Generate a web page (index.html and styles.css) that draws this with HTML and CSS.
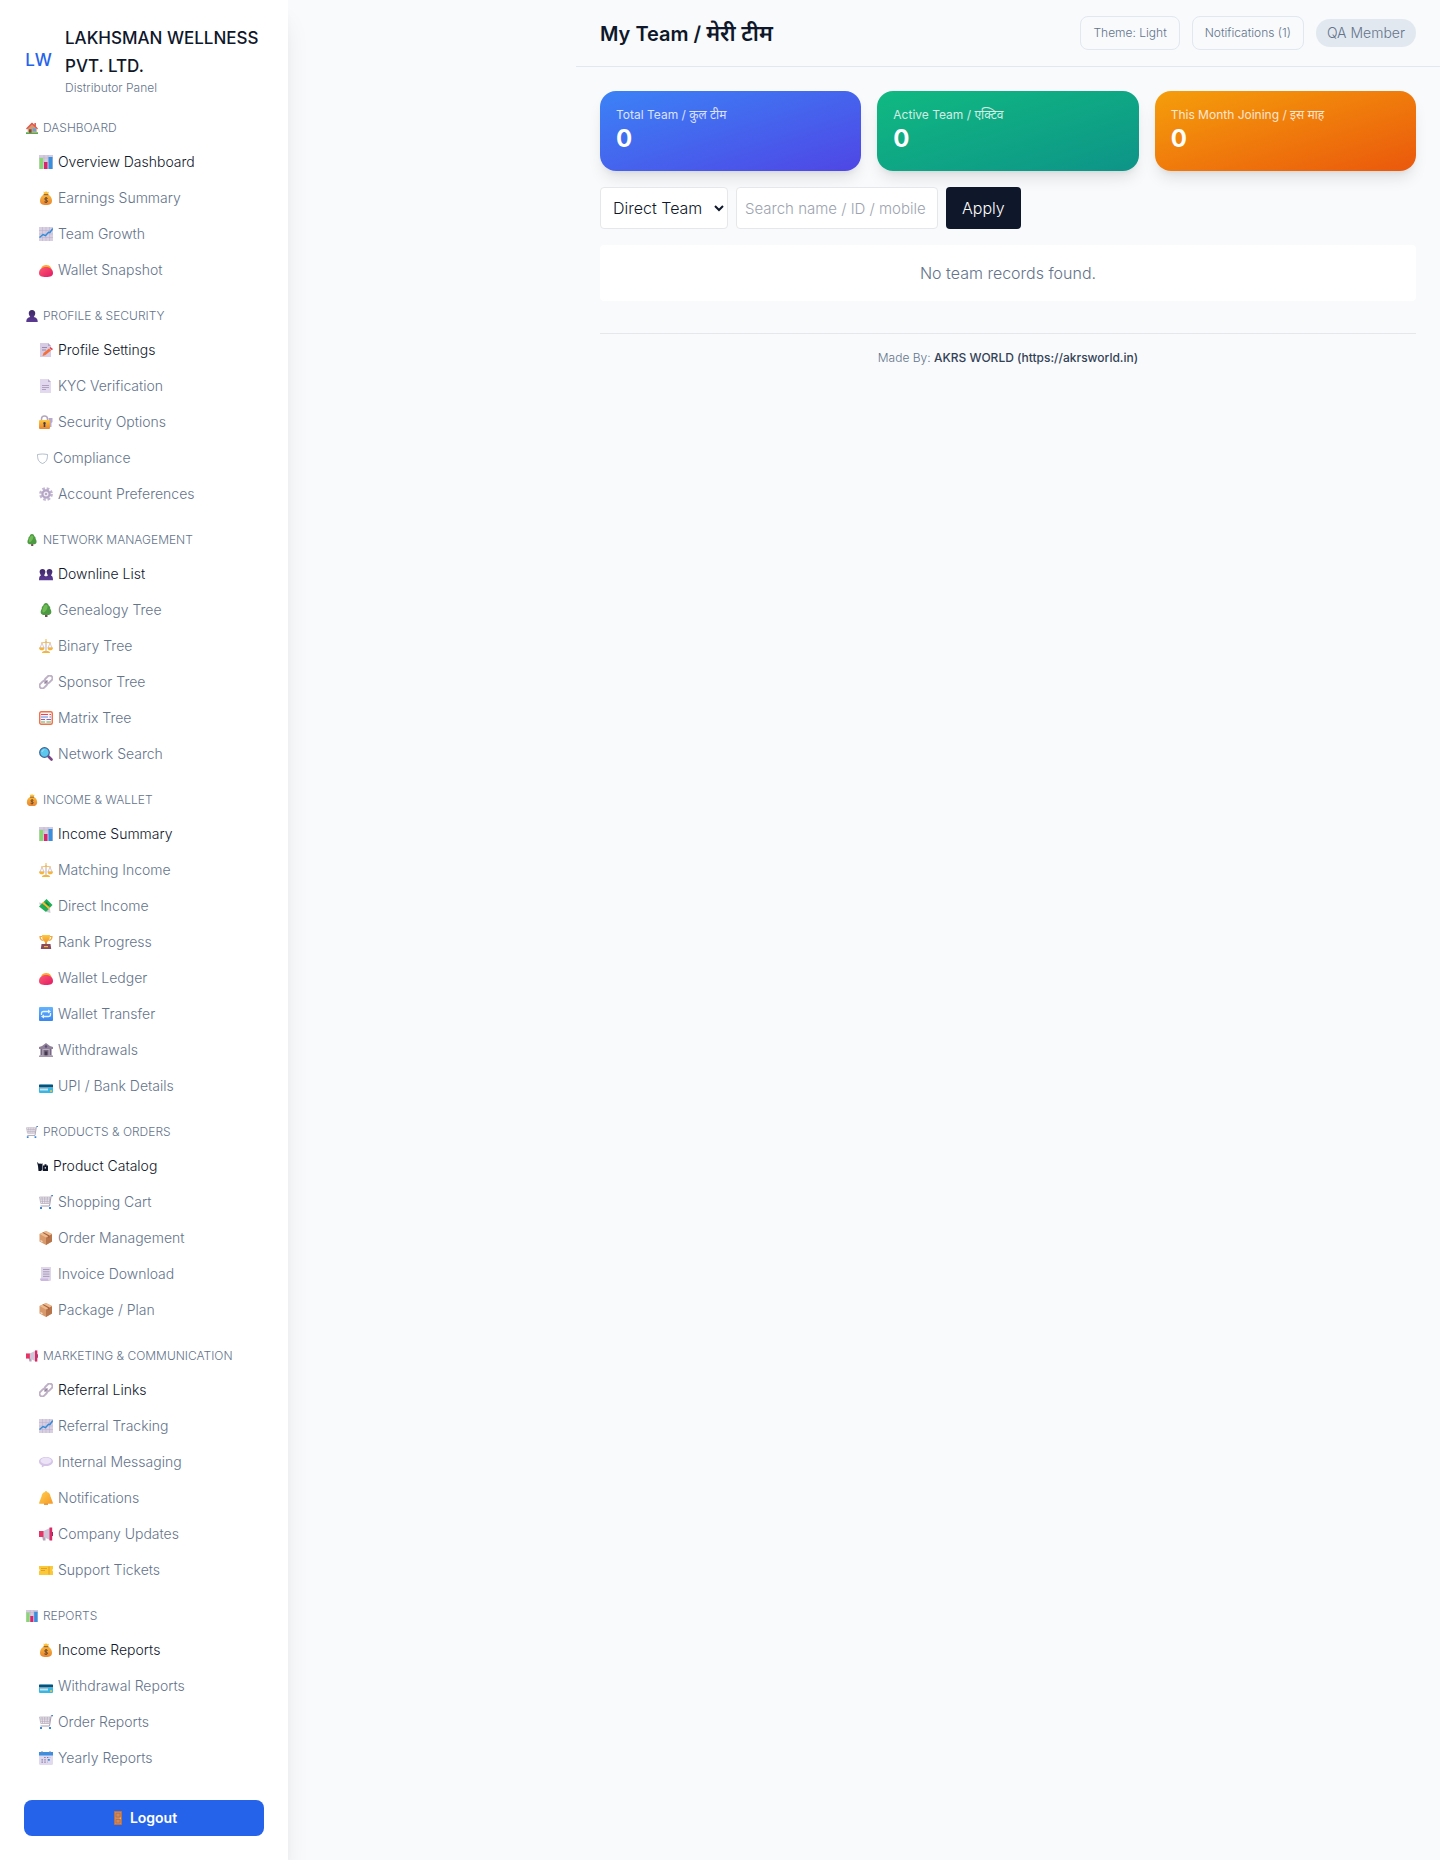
FILE: index.html
```html
<!DOCTYPE html>
<html lang="en">
<head>
<meta charset="utf-8">
<meta name="viewport" content="width=device-width, initial-scale=1">
<title>My Team</title>
<link rel="stylesheet" href="styles.css">
</head>
<body>
<svg class="sprite" aria-hidden="true">
  <defs>
    <linearGradient id="g-gold" x1="0" y1="0" x2="0" y2="1"><stop offset="0" stop-color="#ffc83d"/><stop offset="1" stop-color="#e88532"/></linearGradient>
    <linearGradient id="g-bell" x1="0" y1="0" x2="1" y2="1"><stop offset="0" stop-color="#ffd04a"/><stop offset="1" stop-color="#f59a2c"/></linearGradient>
    <linearGradient id="g-red" x1="0" y1="0" x2="1" y2="1"><stop offset="0" stop-color="#ff5a6e"/><stop offset="1" stop-color="#e01a66"/></linearGradient>
    <linearGradient id="g-purple" x1="0" y1="0" x2="0" y2="1"><stop offset="0" stop-color="#3f2a66"/><stop offset="1" stop-color="#5c3a94"/></linearGradient>
    <linearGradient id="g-blue" x1="0" y1="0" x2="0" y2="1"><stop offset="0" stop-color="#63b4ff"/><stop offset="1" stop-color="#3a86ee"/></linearGradient>
  </defs>
  <symbol id="house" viewBox="0 0 14 14"><path fill="#4caf50" d="M0 12h14v2H0z"/><path fill="#d29a72" d="M2 7l5-5 5.500 5v5.500H2z"/><path fill="#e2574c" d="M9.800 1.200h1.800v4H9.800zM0 7.500L6.500 1 7.500 1 14 7.500l-1 1L7 3 1.200 8.700z"/><path fill="#7a4a3a" d="M3.500 8.500h3v4h-3z"/><path fill="#4aa8f0" d="M8 7.500h3.500v3.200H8z"/></symbol>
  <symbol id="bars" viewBox="0 0 14 14"><path fill="#d5cbe0" d="M0 0h14v14H0z"/><path stroke="#b9adc9" stroke-width=".5" d="M0 3h14M5 0v8M9.200 0v8"/><path fill="#86d96b" d="M.5 3H4v11H.5z"/><path fill="#d6246e" d="M5 7h3.500v7H5z"/><path fill="#3a8fdc" d="M9.500 2h4v12h-4z"/></symbol>
  <symbol id="moneybag" viewBox="0 0 14 14"><path fill="url(#g-gold)" d="M4.500.5L6 1.200 7 0l1.200 1.200L10 .8 9 3.500c2.500 1 4 3.500 4 6 0 3.500-2 4.500-6 4.500s-6-1-6-4.500c0-2.500 1.500-5 4-6z"/><path fill="#8a5530" d="M4.600 3.200h4.800v1H4.600z"/><path fill="none" stroke="#6b4630" stroke-width="1" d="M8.700 7.500C8 6.700 5.600 6.700 5.600 8s3 .8 3 2.200-2.500 1.400-3.300.6M7.100 6v6"/></symbol>
  <symbol id="growth" viewBox="0 0 14 14"><path fill="#d8cfe2" d="M0 0h14v14H0z"/><path stroke="#b8accb" stroke-width=".5" d="M0 3.500h14M0 7h14M0 10.500h14M3.500 0v14M7 0v14M10.500 0v14"/><path fill="none" stroke="#2f8bd8" stroke-width="1.400" d="M.5 10.500L4 7.500l2.500 1.200L9.500 5.200l1.500.3 2.800-4"/></symbol>
  <symbol id="purse" viewBox="0 0 14 14"><path fill="#ffab2e" d="M2 5.500C3 2.500 5 2 7 2s4.500.5 5.500 4z"/><path fill="url(#g-red)" d="M7 4c4 0 7 2.500 7 6 0 3-2.500 4-7 4s-7-1-7-4c0-3.500 3-6 7-6z"/></symbol>
  <symbol id="person" viewBox="0 0 14 14"><path fill="url(#g-purple)" d="M7 0c2.400 0 3.800 1.500 3.800 3.700S9.500 7.200 9 8.300c3 .4 4.700 2 4.700 5.700H.3C.3 10.300 2 8.700 5 8.300 4.500 7.200 3.200 5.900 3.200 3.700S4.600 0 7 0z"/></symbol>
  <symbol id="people" viewBox="0 0 14 14"><path fill="url(#g-purple)" d="M3.500 2c1.800 0 2.900 1.200 2.900 2.800S5.500 7.500 5 8.700c1 .1 1.500.4 2 1 .5-.6 1-.9 2-1-.5-1.200-1.400-2.300-1.400-3.900S8.700 2 10.500 2s2.900 1.200 2.900 2.800-1 2.700-1.400 3.700c1.400.3 2 1.500 2 4.700H0c0-3.200.6-4.400 2-4.700C1.600 7.500.6 6.400.6 4.800S1.700 2 3.500 2z"/></symbol>
  <symbol id="memo" viewBox="0 0 14 14"><path fill="#d8cce4" d="M1 0h8l3 3v11H1z"/><path fill="#b3a4c4" d="M9 0l3 3H9z"/><path stroke="#9a8bac" d="M3 4.500h5M3 7h4"/><path fill="#f4703a" d="M3.500 13l1-3L10 5.500l2 2L6.500 12z"/><path fill="#e83b46" d="M10.500 5l1-1L14 6l-1.200 1.200z"/></symbol>
  <symbol id="page" viewBox="0 0 14 14"><path fill="#e3d9ee" d="M1 0h8l3 3v11H1z"/><path fill="#b9abc9" d="M9 0l3 3H9z"/><path stroke="#a99bb9" stroke-width=".9" d="M3 6.500h7M3 8.500h7M3 10.500h4"/></symbol>
  <symbol id="lock" viewBox="0 0 14 14"><path fill="#b9a9cf" d="M9.500 3h4v4L12.500 8v4h-2z"/><path fill="none" stroke="#b3a7bd" stroke-width="1.500" d="M2.500 6V4c0-4 6-4 6 0v2"/><rect y="5" width="11" height="9" rx="1" fill="url(#g-gold)"/><path fill="#4b3a4b" d="M5.500 7a1.300 1.300 0 0 1 .8 2.300V12H4.700V9.300A1.300 1.300 0 0 1 5.500 7z"/></symbol>
  <symbol id="shield" viewBox="0 0 11 14"><path fill="none" stroke="#94a3b8" stroke-width=".7" d="M.5 3.500c2-.2 3-.5 5-.5s3 .3 5 .5c0 5-1 7.500-5 9C1.500 11 .5 8.500.5 3.500z"/></symbol>
  <symbol id="gear" viewBox="0 0 14 14"><circle cx="7" cy="7" r="5.600" fill="none" stroke="#c3b6d2" stroke-width="2.600" stroke-dasharray="2.600 1.800"/><circle cx="7" cy="7" r="3.600" fill="#efe9f5" stroke="#b3a5c4" stroke-width="2.200"/><circle cx="7" cy="7" r="1" fill="#a798b9"/></symbol>
  <symbol id="tree" viewBox="0 0 14 14"><path fill="#75485a" d="M6 11h2.500v3H6z"/><path fill="#4c9a41" d="M7 0c1.400 0 2.300 1 2.700 2.500 1.300.8 1.800 2 1.500 3.200 1.300 1.600 1.500 3.800.6 5-1 1.300-2.800 1.300-4.800 1.300s-3.800 0-4.800-1.300c-.9-1.200-.6-3.400.6-5-.3-1.200.3-2.500 1.500-3.200C4.700 1 5.600 0 7 0z"/><path fill="#6fbb55" d="M6 2c2-1 3 .5 2.500 2.500S6.500 9 4.500 9.500 3.500 4 6 2z"/></symbol>
  <symbol id="scales" viewBox="0 0 14 14"><path fill="none" stroke="#c3b2c3" stroke-width=".7" d="M3 4L1 9h4zM11 4L9 9h4z"/><path fill="none" stroke="#b9a5b9" d="M7 2v10"/><path fill="#f5b53c" d="M6.500 0h1v3L12 3.500v.8L7 3.800 2 4.300v-.8L6.500 3zM0 8.500h5.500c0 2.300-1.500 2.800-2.700 2.800S0 10.800 0 8.500zM8.500 8.500H14c0 2.300-1.500 2.800-2.700 2.800s-2.800-.5-2.800-2.800zM3 14c0-1.600 1-2 4-2s4 .4 4 2z"/></symbol>
  <symbol id="link" viewBox="0 0 14 14"><g fill="none" stroke="#beb1c6" stroke-width="2" transform="rotate(-45 7 7)"><rect x="-1" y="4.300" width="8.500" height="5.400" rx="2.700"/><rect x="6.500" y="4.300" width="8.500" height="5.400" rx="2.700"/></g><path stroke="#8f8299" stroke-width="1.200" d="M5.500 8.500l3-3"/></symbol>
  <symbol id="abacus" viewBox="0 0 14 14"><rect x=".7" y=".7" width="12.600" height="12.600" rx="1.500" fill="#fff4f0" stroke="#f2704a" stroke-width="1.400"/><path stroke="#e83f62" stroke-width="1.200" d="M2 3.500h7M10.500 3.500H12"/><path stroke="#4596e6" stroke-width="1.200" d="M2 6h7M10.500 6H12"/><path stroke="#8a5acb" stroke-width="1.200" d="M2 8.500h4M7.500 8.500H12"/><path stroke="#3fbf72" stroke-width="1.200" d="M2 11h4M7.500 11H12"/></symbol>
  <symbol id="search" viewBox="0 0 14 14"><path stroke="#7a4585" stroke-width="2.600" stroke-linecap="round" d="M9.500 9.500l3 3"/><circle cx="5.500" cy="5.500" r="4.800" fill="#5cc8ee" stroke="#3f6196" stroke-width="1.200"/><path fill="none" stroke="#a8e8fb" d="M3 5c.3-1.400 1-2 2.300-2.300"/></symbol>
  <symbol id="cash" viewBox="0 0 14 14"><path fill="#cfcbd6" d="M0 3.500l3 .5 1 3-3-.5zM7 10h4l.5 4-3.500-1z"/><path fill="#1fae58" d="M0 7.500L7.500 0 13.500 6 7 13z"/><path fill="#0b8a44" d="M7.500 3l2.800 2.800L7.500 9 4.500 6z"/><path fill="#f7b733" d="M3 4.300l1.500-1.500 6.500 6L9.700 10.300z"/></symbol>
  <symbol id="trophy" viewBox="0 0 14 14"><path fill="none" stroke="#f3a73b" stroke-width="1.200" d="M3 1.500H1C1 4 2 5 4 5.500M11 1.500h2C13 4 12 5 10 5.500"/><path fill="url(#g-gold)" d="M3 0h8c0 4-1 6-3 7v3H6V7C4 6 3 4 3 0z"/><path fill="#8b4a5a" d="M2.500 9h9l.7 5H1.800z"/><path fill="#f2b544" d="M5 11h4v1.200H5z"/></symbol>
  <symbol id="repeat" viewBox="0 0 14 14"><rect width="14" height="14" rx="1" fill="url(#g-blue)"/><path fill="none" stroke="#eaf4ff" stroke-width="1.300" d="M2.500 8V6.500c0-1.200.8-2 2-2H10M11.500 6v1.500c0 1.200-.8 2-2 2H4"/><path fill="#eaf4ff" d="M9 2.500l3 2-3 2zM5 7.500l-3 2 3 2z"/></symbol>
  <symbol id="bank" viewBox="0 0 14 14"><path fill="#8f8298" d="M0 4l3-1 4-3 4 3 3 1v2H0z"/><path fill="#b8adc0" d="M1 6h12v7H1z"/><path fill="#77697f" d="M2 6h1.300v6H2zM10.700 6H12v6h-1.300zM4.500 7h5v5.500h-5z"/><path fill="#43384d" d="M5.700 8.500h2.600v4H5.700z"/><circle cx="7" cy="3.500" r="1.200" fill="#5d4a78"/><path fill="#a498ad" d="M0 12.500h14V14H0z"/></symbol>
  <symbol id="card" viewBox="0 0 14 14"><rect y="5" width="14" height="9" rx="1" fill="#35b8e6"/><path fill="#3b3f55" d="M0 6h14v2H0z"/><path fill="#d5e0e4" d="M1 9.500h8v2H1z"/><circle cx="12" cy="12" r="1" fill="#f5c343"/></symbol>
  <symbol id="cart" viewBox="0 0 14 14"><path fill="#efebf2" d="M.5 2h10.500l-1 6.500H1.800z"/><path fill="none" stroke="#b3a9ba" stroke-width=".7" d="M.5 2h10.500l-1 6.500H1.800zM3 2l.6 6.500M5.700 2v6.500M8.400 2L8 8.500M1 4h9.500M1.400 6.300h9"/><path fill="none" stroke="#9a90a4" stroke-width=".9" d="M13.500.6h-1.300L10.500 11H1.500"/><path fill="#3d86d8" d="M12.500 0H14v1.200h-1.500zM1 12h2v2H1zM10 12h2v2h-2z"/></symbol>
  <symbol id="catalog" viewBox="0 0 11 14"><path fill="#0f172a" d="M0 3l1 .7L2 5l1-.8L4 5l1.500-.7V11.500H4v.5H1.500L1 7zM6 6.500h1.500V5.300h2v1.200H11V12H6z"/><path fill="#fff" d="M7.700 8.200h1.300v1.200H7.700z"/></symbol>
  <symbol id="package" viewBox="0 0 14 14"><path fill="#d99a6b" d="M7 0l6 3v7.500L7 14l-6.500-3.500V3z"/><path fill="#b8754c" d="M7 6.500l6-3.500v7.500L7 14z"/><path fill="#ecba8c" d="M7 0l6 3-6 3.500L.5 3z"/><path fill="#a4603e" d="M3.500 1.800l1-.6 6 3.300v2l-1.200.7v-2z"/><path fill="#f5e3d5" d="M1.500 9l2 1v1.200l-2-1z"/></symbol>
  <symbol id="receipt" viewBox="0 0 14 14"><path fill="#e0d6ea" d="M2 0h10v12.500c0 1-.6 1.500-1.500 1.500H2z"/><path fill="#cbb8e0" d="M1 11.500h8c0 1.500.4 2.500 1.500 2.500H2.500C1.500 14 1 13 1 11.500z"/><path stroke="#a294b5" stroke-width=".9" d="M4 2.500h6.500M4 4.800h6.500M4 7.100h6.500M4 9.400h6.500"/></symbol>
  <symbol id="megaphone" viewBox="0 0 14 14"><path fill="#b0a4b8" d="M3 9h3.500v4.500H4z"/><path fill="#e83465" d="M0 4h5v6H0z"/><path fill="#cfc4d8" d="M4.500 4L11 1v12l-6.500-3z"/><path fill="#dc2864" d="M10.500.5h2.700v13h-2.700z"/><path fill="#8d2f64" d="M13 5h1v4h-1z"/></symbol>
  <symbol id="bubble" viewBox="0 0 14 14"><path fill="#d3c4e8" d="M7 2c4 0 7 1.800 7 4.500S11 11 7 11c-.8 0-1.500 0-2 .2L2.800 12.500V10.300C1 9.500 0 8.300 0 6.500 0 3.800 3 2 7 2z"/><ellipse cx="7" cy="5.800" rx="5.500" ry="3.200" fill="#ece3f7"/></symbol>
  <symbol id="bell" viewBox="0 0 14 14"><path fill="#d98324" d="M5 11h4v2.800H5z"/><path fill="url(#g-bell)" d="M6.200 0h1.600v1c2.400.5 3.400 2.300 3.700 4.500L13.800 11.500v1.200H.2V11.500L2.500 5.500C2.800 3.300 3.800 1.500 6.200 1z"/></symbol>
  <symbol id="ticket" viewBox="0 0 14 14"><path fill="#fbc938" d="M0 3h14v3c-1 .3-1 2 0 2.300V12H0V8.300C1 8 1 6.300 0 6z"/><path stroke="#d9952b" stroke-width=".8" d="M2 5.500h6M2 7.500h4M10 3.500v8"/></symbol>
  <symbol id="calendar" viewBox="0 0 14 14"><rect y="1" width="14" height="13" rx="1.500" fill="#e1daee"/><path fill="#3c8fe0" d="M0 1h14v3.500H0z"/><path stroke="#8a84a0" d="M3 0v2.500M11 0v2.500"/><path stroke="#8878a8" stroke-width="1.200" stroke-dasharray="1.400 1.400" d="M5.200 6.500h6M2.500 8.800h6M2.500 11.200h6"/><path fill="#3c8fe0" d="M9 8h1.800v1.700H9z"/></symbol>
  <symbol id="door" viewBox="0 0 14 14"><path fill="#b06a45" d="M3 0h8v14H3z"/><path fill="#cf8a60" d="M3.700.7h6.600v12.600H3.700z"/><path fill="none" stroke="#b06a45" stroke-width=".7" d="M5 2.200h4V6H5zM5 8.500h4v3.500H5z"/><circle cx="9.300" cy="7.200" r=".7" fill="#f5c343"/></symbol>
</svg>

<div class="layout">
  <aside class="sidebar">
    <div class="brand">
      <span class="brand-logo">LW</span>
      <div>
        <div class="brand-name">LAKHSMAN WELLNESS PVT. LTD.</div>
        <div class="brand-sub">Distributor Panel</div>
      </div>
    </div>

    <nav class="menu">
      <section>
        <h2 class="menu-title"><svg class="icon"><use href="#house"/></svg>Dashboard</h2>
        <a class="menu-link is-lead" href="#"><svg class="icon"><use href="#bars"/></svg>Overview Dashboard</a>
        <a class="menu-link" href="#"><svg class="icon"><use href="#moneybag"/></svg>Earnings Summary</a>
        <a class="menu-link" href="#"><svg class="icon"><use href="#growth"/></svg>Team Growth</a>
        <a class="menu-link" href="#"><svg class="icon"><use href="#purse"/></svg>Wallet Snapshot</a>
      </section>
      <section>
        <h2 class="menu-title"><svg class="icon"><use href="#person"/></svg>Profile &amp; Security</h2>
        <a class="menu-link is-lead" href="#"><svg class="icon"><use href="#memo"/></svg>Profile Settings</a>
        <a class="menu-link" href="#"><svg class="icon"><use href="#page"/></svg>KYC Verification</a>
        <a class="menu-link" href="#"><svg class="icon"><use href="#lock"/></svg>Security Options</a>
        <a class="menu-link" href="#"><svg class="icon icon-narrow"><use href="#shield"/></svg>Compliance</a>
        <a class="menu-link" href="#"><svg class="icon"><use href="#gear"/></svg>Account Preferences</a>
      </section>
      <section>
        <h2 class="menu-title"><svg class="icon"><use href="#tree"/></svg>Network Management</h2>
        <a class="menu-link is-lead" href="#"><svg class="icon"><use href="#people"/></svg>Downline List</a>
        <a class="menu-link" href="#"><svg class="icon"><use href="#tree"/></svg>Genealogy Tree</a>
        <a class="menu-link" href="#"><svg class="icon"><use href="#scales"/></svg>Binary Tree</a>
        <a class="menu-link" href="#"><svg class="icon"><use href="#link"/></svg>Sponsor Tree</a>
        <a class="menu-link" href="#"><svg class="icon"><use href="#abacus"/></svg>Matrix Tree</a>
        <a class="menu-link" href="#"><svg class="icon"><use href="#search"/></svg>Network Search</a>
      </section>
      <section>
        <h2 class="menu-title"><svg class="icon"><use href="#moneybag"/></svg>Income &amp; Wallet</h2>
        <a class="menu-link is-lead" href="#"><svg class="icon"><use href="#bars"/></svg>Income Summary</a>
        <a class="menu-link" href="#"><svg class="icon"><use href="#scales"/></svg>Matching Income</a>
        <a class="menu-link" href="#"><svg class="icon"><use href="#cash"/></svg>Direct Income</a>
        <a class="menu-link" href="#"><svg class="icon"><use href="#trophy"/></svg>Rank Progress</a>
        <a class="menu-link" href="#"><svg class="icon"><use href="#purse"/></svg>Wallet Ledger</a>
        <a class="menu-link" href="#"><svg class="icon"><use href="#repeat"/></svg>Wallet Transfer</a>
        <a class="menu-link" href="#"><svg class="icon"><use href="#bank"/></svg>Withdrawals</a>
        <a class="menu-link" href="#"><svg class="icon"><use href="#card"/></svg>UPI / Bank Details</a>
      </section>
      <section>
        <h2 class="menu-title"><svg class="icon"><use href="#cart"/></svg>Products &amp; Orders</h2>
        <a class="menu-link is-lead" href="#"><svg class="icon icon-narrow"><use href="#catalog"/></svg>Product Catalog</a>
        <a class="menu-link" href="#"><svg class="icon"><use href="#cart"/></svg>Shopping Cart</a>
        <a class="menu-link" href="#"><svg class="icon"><use href="#package"/></svg>Order Management</a>
        <a class="menu-link" href="#"><svg class="icon"><use href="#receipt"/></svg>Invoice Download</a>
        <a class="menu-link" href="#"><svg class="icon"><use href="#package"/></svg>Package / Plan</a>
      </section>
      <section>
        <h2 class="menu-title"><svg class="icon"><use href="#megaphone"/></svg>Marketing &amp; Communication</h2>
        <a class="menu-link is-lead" href="#"><svg class="icon"><use href="#link"/></svg>Referral Links</a>
        <a class="menu-link" href="#"><svg class="icon"><use href="#growth"/></svg>Referral Tracking</a>
        <a class="menu-link" href="#"><svg class="icon"><use href="#bubble"/></svg>Internal Messaging</a>
        <a class="menu-link" href="#"><svg class="icon"><use href="#bell"/></svg>Notifications</a>
        <a class="menu-link" href="#"><svg class="icon"><use href="#megaphone"/></svg>Company Updates</a>
        <a class="menu-link" href="#"><svg class="icon"><use href="#ticket"/></svg>Support Tickets</a>
      </section>
      <section>
        <h2 class="menu-title"><svg class="icon"><use href="#bars"/></svg>Reports</h2>
        <a class="menu-link is-lead" href="#"><svg class="icon"><use href="#moneybag"/></svg>Income Reports</a>
        <a class="menu-link" href="#"><svg class="icon"><use href="#card"/></svg>Withdrawal Reports</a>
        <a class="menu-link" href="#"><svg class="icon"><use href="#cart"/></svg>Order Reports</a>
        <a class="menu-link" href="#"><svg class="icon"><use href="#calendar"/></svg>Yearly Reports</a>
      </section>
    </nav>

    <button class="logout" type="button"><svg class="icon"><use href="#door"/></svg>Logout</button>
  </aside>

  <div class="content">
    <header class="topbar">
      <h1 class="page-title">My Team / <span lang="hi">मेरी टीम</span></h1>
      <div class="topbar-actions">
        <button class="chip" type="button">Theme: Light</button>
        <button class="chip" type="button">Notifications (1)</button>
        <span class="user-pill">QA Member</span>
      </div>
    </header>

    <main class="page">
      <div class="stats">
        <div class="stat stat-blue"><div class="stat-label">Total Team / <span lang="hi">कुल टीम</span></div><div class="stat-value">0</div></div>
        <div class="stat stat-green"><div class="stat-label">Active Team / <span lang="hi">एक्टिव</span></div><div class="stat-value">0</div></div>
        <div class="stat stat-orange"><div class="stat-label">This Month Joining / <span lang="hi">इस माह</span></div><div class="stat-value">0</div></div>
      </div>

      <form class="filters">
        <select class="field field-select" aria-label="Team type"><option>Direct Team</option></select>
        <input class="field field-search" type="text" aria-label="Search team" placeholder="Search name / ID / mobile">
        <button class="apply" type="submit">Apply</button>
      </form>

      <table class="team-table">
        <tbody><tr><td>No team records found.</td></tr></tbody>
      </table>

      <footer class="footer">Made By: <a href="#">AKRS WORLD (https://akrsworld.in)</a></footer>
    </main>
  </div>
</div>
</body>
</html>
```

FILE: styles.css
```css
*, *::before, *::after { box-sizing: border-box; }

body {
  margin: 0;
  background: #f8fafc;
  color: #0f172a;
  font-family: Inter, "Noto Sans", "Noto Sans Devanagari", sans-serif;
  font-size: 16px;
  font-weight: 300;
  line-height: 24px;
}

h1, h2 { margin: 0; font-weight: 300; }
a { color: inherit; text-decoration: none; }
button, input, select { font: inherit; color: inherit; margin: 0; }
button { cursor: pointer; }

.sprite { position: absolute; width: 0; height: 0; }

.layout { display: flex; min-height: 100vh; }

/* Sidebar */
.sidebar {
  flex: 0 0 288px;
  display: flex;
  flex-direction: column;
  gap: 24px;
  padding: 24px;
  background: #fff;
  box-shadow: 0 20px 25px -5px rgb(0 0 0 / 10%), 0 8px 10px -6px rgb(0 0 0 / 10%);
}

.brand { display: flex; align-items: center; gap: 12px; }
.brand-logo {
  flex: 0 0 29px;
  text-align: center;
  font-size: 17px;
  font-weight: 500;
  color: #2563eb;
}
.brand-name { font-size: 17px; line-height: 28px; font-weight: 500; }
.brand-sub { font-size: 12px; line-height: 16px; color: #64748b; }

.menu { display: flex; flex-direction: column; gap: 20px; }

.menu-title {
  display: flex;
  align-items: center;
  margin-bottom: 8px;
  padding-left: 2px;
  font-size: 12px;
  line-height: 16px;
  text-transform: uppercase;
  color: #64748b;
}

.menu-link {
  display: flex;
  align-items: center;
  padding: 8px 12px 8px 15px;
  font-size: 14px;
  line-height: 20px;
  color: #64748b;
}
.menu-link.is-lead { color: #0f172a; }

.icon { flex: none; width: 14px; height: 14px; margin-right: 5px; }
.menu-title .icon { width: 12px; height: 12px; }
.menu-link .icon-narrow { width: 11px; margin-left: -2px; }

.logout {
  display: flex;
  align-items: center;
  justify-content: center;
  padding: 8px;
  border: 0;
  border-radius: 8px;
  background: #2563eb;
  color: #fff;
  font-size: 14px;
  line-height: 20px;
  font-weight: 600;
}

/* Main column */
.content { flex: 1; min-width: 0; margin-left: 288px; }

.topbar {
  display: flex;
  align-items: center;
  justify-content: space-between;
  padding: 16px 24px;
  border-bottom: 1px solid #e2e8f0;
}
.page-title { font-size: 20px; line-height: 28px; font-weight: 600; }
.page-title span { font-size: 22px; }
.topbar-actions { display: flex; align-items: center; gap: 12px; }

.chip {
  padding: 8px 12px;
  border: 1px solid #e2e8f0;
  border-radius: 8px;
  background: transparent;
  color: #64748b;
  font-size: 12px;
  line-height: 16px;
}
.user-pill {
  padding: 4px 11px;
  border-radius: 14px;
  background: #e2e8f0;
  color: #64748b;
  font-size: 14px;
  line-height: 20px;
}

.page { display: flex; flex-direction: column; gap: 16px; padding: 24px; }

.stats { display: grid; grid-template-columns: repeat(3, 1fr); gap: 16px; }
.stat {
  padding: 16px;
  border-radius: 16px;
  color: #fff;
  box-shadow: 0 10px 15px -3px rgb(0 0 0 / 10%), 0 4px 6px -4px rgb(0 0 0 / 10%);
}
.stat-blue { background: linear-gradient(to bottom right, #3b82f6, #4f46e5); }
.stat-green { background: linear-gradient(to bottom right, #10b981, #0d9488); }
.stat-orange { background: linear-gradient(to bottom right, #f59e0b, #ea580c); }
.stat-label { font-size: 12px; line-height: 16px; font-weight: 400; opacity: .8; }
.stat-value { font-size: 24px; line-height: 32px; font-weight: 700; }

.filters { display: flex; flex-wrap: wrap; gap: 8px; }
.field {
  height: 42px;
  padding: 8px;
  border: 1px solid #e5e7eb;
  border-radius: 4px;
  background: #fff;
}
.field-select { width: 128px; }
.field-search { width: 202px; font-size: 15px; }
.field-search::placeholder { color: #9ca3af; opacity: 1; }
.apply {
  padding: 8px 16px;
  border: 0;
  border-radius: 4px;
  background: #0f172a;
  color: #fff;
}

.team-table { width: 100%; border-collapse: collapse; border-radius: 4px; background: #fff; }
.team-table td { padding: 16px; text-align: center; color: #64748b; }

.footer {
  margin-top: 16px;
  padding-top: 16px;
  border-top: 1px solid #e5e7eb;
  text-align: center;
  font-size: 12px;
  line-height: 16px;
  color: #64748b;
}
.footer a { color: #334155; font-weight: 500; }
```
